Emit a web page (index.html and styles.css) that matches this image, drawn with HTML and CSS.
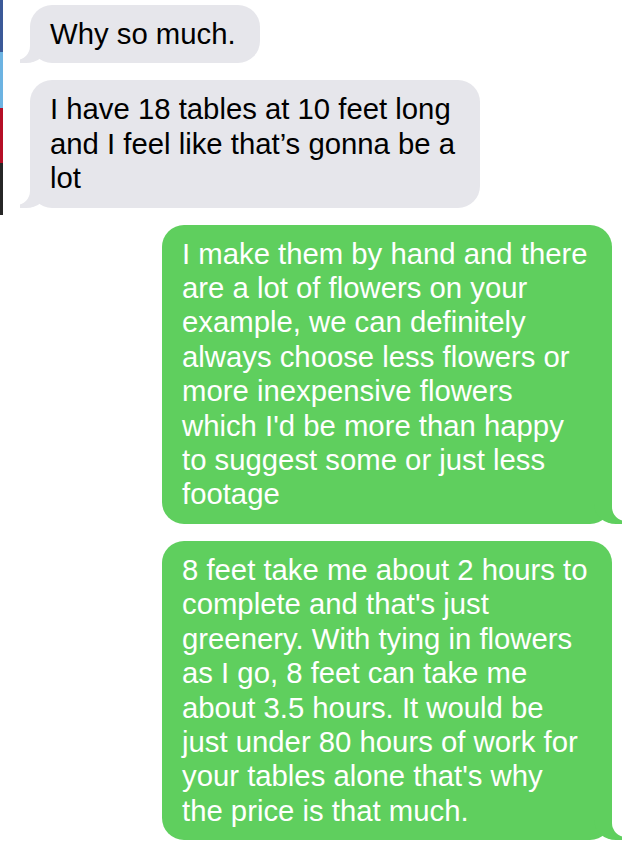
FILE: index.html
```html
<!DOCTYPE html>
<html lang="en">
  <head>
    <title>Messages</title>
    <meta charset="UTF-8" />
    <meta name="viewport" content="width=device-width, initial-scale=1.0" />
    <link rel="stylesheet" href="styles.css">
  </head>
  <body>
    <div class="share">
      <span class="share-fb"></span>
      <span class="share-tw"></span>
      <span class="share-pin"></span>
      <span class="share-mail"></span>
    </div>
    <div class="thread">
      <p class="bubble them">Why so much.</p>
      <p class="bubble them">I have 18 tables at 10 feet long and I feel like that’s gonna be a lot</p>
      <p class="bubble me">I make them by hand and there are a lot of flowers on your example, we can definitely always choose less flowers or more inexpensive flowers which I'd be more than happy to suggest some or just less footage</p>
      <p class="bubble me">8 feet take me about 2 hours to complete and that's just greenery. With tying in flowers as I go, 8 feet can take me about 3.5 hours. It would be just under 80 hours of work for your tables alone that's why the price is that much.</p>
    </div>
  </body>
</html>
```

FILE: styles.css
```css
* {
  box-sizing: border-box;
  margin: 0;
  padding: 0;
}
body {
  font-family: "Liberation Sans", Arial, sans-serif;
  background: #fff;
  display: flex;
  align-items: flex-start;
  min-height: 100vh;
}
.share {
  flex: none;
  width: 3px;
  display: flex;
  flex-direction: column;
}
.share span {
  display: block;
}
.share-fb {
  height: 52px;
  background: #3b5998;
}
.share-tw {
  height: 56px;
  background: #6cb3e2;
}
.share-pin {
  height: 55px;
  background: #b50e26;
}
.share-mail {
  height: 52px;
  background: #262626;
}
.thread {
  flex: 1;
  display: flex;
  flex-direction: column;
  gap: 17px;
  padding: 5px 22px 0 27px;
}
.bubble {
  position: relative;
  max-width: 450px;
  padding: 12px 24px 12px 20px;
  border-radius: 22px;
  font-size: 29.3px;
  line-height: 34.4px;
}
.bubble::before,
.bubble::after {
  content: "";
  position: absolute;
  bottom: 0;
  height: 26px;
}
.them {
  align-self: flex-start;
  background: #e6e6eb;
  color: #000;
}
.them::before {
  left: -10px;
  border-left: 28px solid #e6e6eb;
  border-bottom-right-radius: 22px 20px;
}
.them::after {
  left: -18px;
  width: 18px;
  background: #fff;
  border-bottom-right-radius: 14px;
  transform: translateY(-3px);
}
.me {
  align-self: flex-end;
  background: #5fcf5e;
  color: #fff;
}
.me::before {
  right: -10px;
  border-right: 28px solid #5fcf5e;
  border-bottom-left-radius: 22px 20px;
}
.me::after {
  right: -18px;
  width: 18px;
  background: #fff;
  border-bottom-left-radius: 14px;
  transform: translateY(-3px);
}
```
